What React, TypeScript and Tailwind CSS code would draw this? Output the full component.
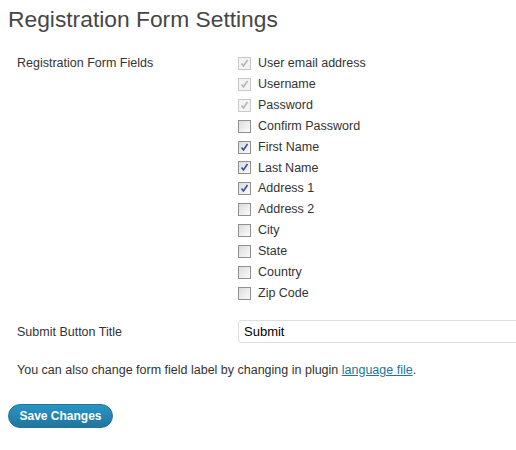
import React from 'react';

type Field = { label: string; checked: boolean; disabled?: boolean };

const fields: Field[] = [
  { label: 'User email address', checked: true, disabled: true },
  { label: 'Username', checked: true, disabled: true },
  { label: 'Password', checked: true, disabled: true },
  { label: 'Confirm Password', checked: false },
  { label: 'First Name', checked: true },
  { label: 'Last Name', checked: true },
  { label: 'Address 1', checked: true },
  { label: 'Address 2', checked: false },
  { label: 'City', checked: false },
  { label: 'State', checked: false },
  { label: 'Country', checked: false },
  { label: 'Zip Code', checked: false },
];

const Box = ({ checked, disabled }: { checked: boolean; disabled?: boolean }) => (
  <span
    className={
      disabled
        ? 'flex h-[13px] w-[13px] items-center justify-center border border-[#c9c9c9] bg-[#f3f3f3]'
        : 'flex h-[13px] w-[13px] items-center justify-center border border-[#8f8f8f] bg-gradient-to-br from-[#dcdcdc] to-[#fbfbfb]'
    }
  >
    {checked && (
      <svg width="9" height="9" viewBox="0 0 9 9">
        <path
          d="M1.5 4.5 L3.5 7 L7.5 1"
          fill="none"
          stroke={disabled ? '#b4b4b4' : '#3a4f9a'}
          strokeWidth="1.6"
        />
      </svg>
    )}
  </span>
);

export default function App() {
  return (
    <div className="min-h-[450px] w-[516px] overflow-hidden bg-white font-['Liberation_Sans',Arial,sans-serif] text-[12.5px] text-[#333]">
      <h2 className="pl-[8px] pt-[5px] text-[22.8px] leading-[29px] text-[#464646]">Registration Form Settings</h2>

      <div className="mt-[19px] grid grid-cols-[230px_1fr] pl-[8px]">
        <div className="pl-[9px] leading-[21px]">Registration Form Fields</div>
        <div className="flex flex-col">
          {fields.map(f => (
            <label key={f.label} className="flex h-[20.9px] items-center gap-[7px]">
              <Box checked={f.checked} disabled={f.disabled} />
              <span>{f.label}</span>
            </label>
          ))}
        </div>

        <div className="mt-[17px] pl-[9px] leading-[22px]">Submit Button Title</div>
        <div className="mt-[16px]">
          <div className="h-[23px] w-[300px] rounded-[3px] border border-[#dfdfdf] bg-white pl-[5px] text-[13px] leading-[21px] text-[#000]">
            Submit
          </div>
        </div>
      </div>

      <p className="mt-[17px] pl-[17px] leading-[20px]">
        You can also change form field label by changing in plugin{' '}
        <a className="text-[#21759b] underline">language file</a>.
      </p>

      <div className="mt-[24px] pl-[8px]">
        <button className="h-[24px] w-[105px] rounded-full border border-[#21759b] bg-gradient-to-b from-[#2a95c5] to-[#21759b] text-[12px] font-bold text-white">
          Save Changes
        </button>
      </div>
    </div>
  );
}
